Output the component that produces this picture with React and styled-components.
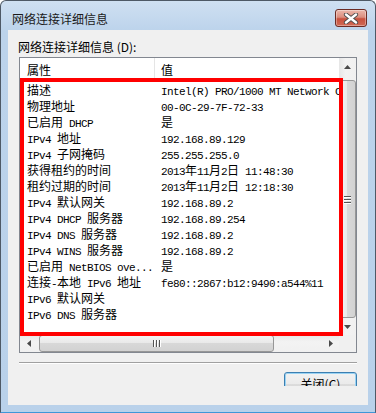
import React from 'react'
import styled, { createGlobalStyle } from 'styled-components'

const GlobalStyle = createGlobalStyle`
    html, body {
        margin: 0;
        padding: 0;
        background: #ffffff;
    }
    body {
        width: 376px;
        height: 413px;
        overflow: hidden;
    }
`

const rows = [
    ['描述', 'Intel(R) PRO/1000 MT Network Connection'],
    ['物理地址', '00-0C-29-7F-72-33'],
    ['已启用 DHCP', '是'],
    ['IPv4 地址', '192.168.89.129'],
    ['IPv4 子网掩码', '255.255.255.0'],
    ['获得租约的时间', '2013年11月2日 11:48:30'],
    ['租约过期的时间', '2013年11月2日 12:18:30'],
    ['IPv4 默认网关', '192.168.89.2'],
    ['IPv4 DHCP 服务器', '192.168.89.254'],
    ['IPv4 DNS 服务器', '192.168.89.2'],
    ['IPv4 WINS 服务器', '192.168.89.2'],
    ['已启用 NetBIOS ove...', '是'],
    ['连接-本地 IPv6 地址', 'fe80::2867:b12:9490:a544%11'],
    ['IPv6 默认网关', ''],
    ['IPv6 DNS 服务器', ''],
]

const HAN = /([\u2E80-\u9FFF\uFF00-\uFFEF]+)/
const isHan = s => /[\u2E80-\u9FFF\uFF00-\uFFEF]/.test(s)

// SimSun style: half-width latin, full-width han
function Mixed({ text }) {
    return text.split(HAN).filter(Boolean).map((part, i) =>
        isHan(part) ? <Han key={i}>{part}</Han> : <Latin key={i}>{part}</Latin>
    )
}

function Arrow({ dir }) {
    const points = {
        up: '0,4 7,4 3.5,0',
        down: '0,0 7,0 3.5,4',
        left: '4,0 4,7 0,3.5',
        right: '0,0 0,7 4,3.5',
    }[dir]
    const vertical = dir === 'up' || dir === 'down'
    return (
        <svg width={vertical ? 7 : 4} height={vertical ? 4 : 7}>
            <polygon points={points} fill="#4a4a4a" />
        </svg>
    )
}

export default function App() {
    return (
        <>
            <GlobalStyle />
            <Window>
                <TitleBar>
                    <Title>网络连接详细信息</Title>
                    <CloseButton>
                        <svg width="16" height="11" viewBox="0 0 16 11">
                            <path d="M3 1.5 L13 9.5 M13 1.5 L3 9.5" stroke="#4b4b4b" strokeWidth="4.2" strokeLinecap="round" />
                            <path d="M3 1.5 L13 9.5 M13 1.5 L3 9.5" stroke="#ffffff" strokeWidth="2.4" strokeLinecap="round" />
                        </svg>
                    </CloseButton>
                </TitleBar>
                <Client>
                    <Label>网络连接详细信息 (D):</Label>
                    <ListBox>
                        <ListContent>
                            <Header>
                                <HeaderCell divider>属性</HeaderCell>
                                <HeaderCell>值</HeaderCell>
                            </Header>
                            {rows.map(([name, value]) => (
                                <Row key={name}>
                                    <Cell first><Mixed text={name} /></Cell>
                                    <Cell><Mixed text={value} /></Cell>
                                </Row>
                            ))}
                        </ListContent>
                        <VScroll>
                            <ArrowBox><Arrow dir="up" /></ArrowBox>
                            <VTrack>
                                <VThumb>
                                    <Grip vertical>
                                        <i /><i /><i />
                                    </Grip>
                                </VThumb>
                            </VTrack>
                            <ArrowBox><Arrow dir="down" /></ArrowBox>
                        </VScroll>
                        <HScroll>
                            <ArrowBox><Arrow dir="left" /></ArrowBox>
                            <HTrack>
                                <HThumb>
                                    <Grip>
                                        <i /><i /><i />
                                    </Grip>
                                </HThumb>
                            </HTrack>
                            <ArrowBox><Arrow dir="right" /></ArrowBox>
                        </HScroll>
                        <Corner />
                        <Highlight />
                    </ListBox>
                    <Separator />
                    <Footer>
                        <ButtonClip>
                            <Button>关闭(C)</Button>
                        </ButtonClip>
                    </Footer>
                </Client>
            </Window>
        </>
    )
}

const Window = styled.div`
    width: 376px;
    height: 413px;
    box-sizing: border-box;
    border: 1px solid #4e5966;
    border-bottom-color: #3f97d8;
    border-radius: 6px 6px 0 0;
    background: linear-gradient(#cfe0f2, #bcd3eb 30px, #b9d1ea);
    display: flex;
    flex-direction: column;
`

const TitleBar = styled.div`
    height: 29px;
    box-sizing: border-box;
    padding: 5px 8px 0 11px;
    display: flex;
    align-items: center;
    justify-content: space-between;
`

const Title = styled.div`
    font-family: "Noto Sans CJK SC", sans-serif;
    font-size: 12px;
    color: #1a1a1a;
`

const CloseButton = styled.div`
    width: 32px;
    height: 18px;
    box-sizing: border-box;
    border: 1px solid #6b2b24;
    border-radius: 3px;
    background: linear-gradient(#ecb7ab, #db8e7f 45%, #c8503d 55%, #d06a55);
    box-shadow: inset 0 0 0 1px rgba(255, 255, 255, 0.35);
    display: flex;
    align-items: center;
    justify-content: center;
`

const Client = styled.div`
    flex: 1;
    margin: 0 7px 7px;
    background: #f0f0f0;
    padding-top: 9px;
    display: flex;
    flex-direction: column;
`

const Label = styled.div`
    height: 16px;
    line-height: 16px;
    padding-left: 10px;
    font-family: "Noto Sans CJK SC", sans-serif;
    font-size: 12px;
    color: #000;
`

const ListBox = styled.div`
    position: relative;
    margin: 2px 11px 0;
    height: 296px;
    box-sizing: border-box;
    border: 1px solid #828790;
    background: #fff;
    display: grid;
    grid-template-columns: 1fr 17px;
    grid-template-rows: 1fr 17px;
`

const ListContent = styled.div`
    overflow: hidden;
    background: #fff;
`

const Header = styled.div`
    height: 24px;
    display: grid;
    grid-template-columns: 135px 1fr;
    border-bottom: 1px solid #e5e5e5;
    box-sizing: border-box;
`

const HeaderCell = styled.div`
    line-height: 23px;
    padding-left: ${p => (p.divider ? 7 : 6)}px;
    border-right: ${p => (p.divider ? '1px solid #e5e5e5' : 'none')};
    font-family: "Noto Sans CJK SC", sans-serif;
    font-size: 12px;
    color: #000;
`

const Row = styled.div`
    height: 16px;
    display: grid;
    grid-template-columns: 135px 1fr;
`

const Cell = styled.div`
    line-height: 16px;
    padding-left: ${p => (p.first ? 7 : 6)}px;
    white-space: pre;
    overflow: hidden;
    color: #000;
`

const Han = styled.span`
    font-family: "Noto Sans CJK SC", sans-serif;
    font-size: 12px;
`

const Latin = styled.span`
    font-family: "Liberation Mono", monospace;
    font-size: 11px;
    letter-spacing: -0.6px;
    color: #000;
`

const VScroll = styled.div`
    display: flex;
    flex-direction: column;
    background: linear-gradient(to right, #e6e6e6, #f3f3f3 40%, #f0f0f0);
`

const HScroll = styled.div`
    display: flex;
    background: linear-gradient(#e6e6e6, #f3f3f3 40%, #f0f0f0);
`

const ArrowBox = styled.div`
    width: 17px;
    height: 17px;
    flex: none;
    display: flex;
    align-items: center;
    justify-content: center;
`

const VTrack = styled.div`
    flex: 1;
    padding: 5px 0 0;
    display: flex;
`

const HTrack = styled.div`
    flex: 1;
    padding-left: 2px;
    display: flex;
`

const VThumb = styled.div`
    flex: 1;
    box-sizing: border-box;
    border: 1px solid #979797;
    border-radius: 3px;
    background: linear-gradient(to right, #f3f3f3, #e9e9e9 45%, #d8d8d8 50%, #d2d2d2);
    display: flex;
    align-items: center;
    justify-content: center;
`

const HThumb = styled.div`
    width: 235px;
    box-sizing: border-box;
    border: 1px solid #979797;
    border-radius: 3px;
    background: linear-gradient(#f3f3f3, #e9e9e9 45%, #d8d8d8 50%, #d2d2d2);
    display: flex;
    align-items: center;
    justify-content: center;
`

const Grip = styled.div`
    display: flex;
    flex-direction: ${p => (p.vertical ? 'column' : 'row')};
    gap: 2px;
    i {
        display: block;
        width: ${p => (p.vertical ? '7px' : '1px')};
        height: ${p => (p.vertical ? '1px' : '7px')};
        background: #555;
        box-shadow: ${p => (p.vertical ? '0 1px 0 #fff' : '1px 0 0 #fff')};
    }
`

const Corner = styled.div`
    background: #f0f0f0;
`

const Highlight = styled.div`
    position: absolute;
    left: 0;
    top: 20px;
    width: 323px;
    height: 258px;
    box-sizing: border-box;
    border: 4px solid #ff0000;
    pointer-events: none;
`

const Separator = styled.div`
    margin: 9px 11px 0;
    height: 1px;
    background: #a0a0a0;
    border-bottom: 1px solid #ffffff;
`

const Footer = styled.div`
    display: flex;
    justify-content: flex-end;
    padding: 8px 11px 0;
`

const ButtonClip = styled.div`
    height: 14px;
    overflow: hidden;
`

const Button = styled.div`
    width: 73px;
    height: 23px;
    box-sizing: border-box;
    border: 1px solid #3c7fb1;
    border-radius: 3px;
    background: linear-gradient(#f2f2f2, #ebebeb 50%, #dddddd 50%, #cfcfcf);
    box-shadow: inset 0 0 0 1px #9ad3f3;
    font-family: "Noto Sans CJK SC", sans-serif;
    font-size: 12px;
    line-height: 21px;
    text-align: center;
    color: #000;
`
